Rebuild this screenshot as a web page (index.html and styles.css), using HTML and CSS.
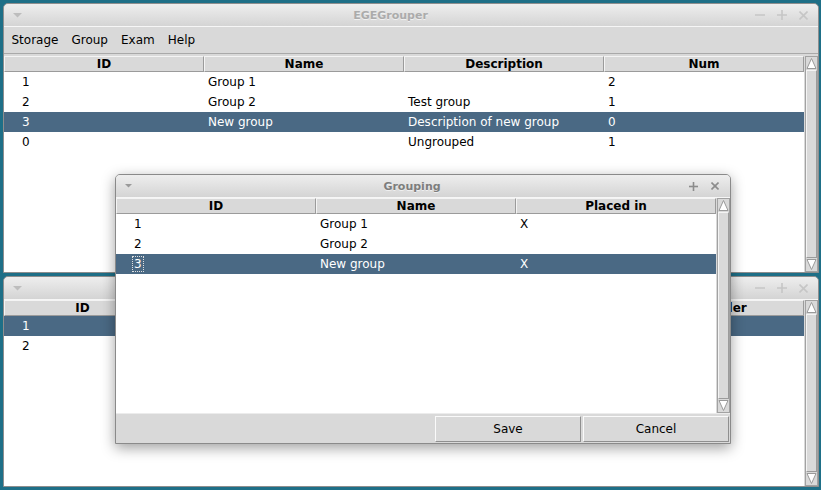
FILE: index.html
```html
<!DOCTYPE html>
<html>
<head>
<meta charset="utf-8">
<link rel="stylesheet" href="styles.css">
</head>
<body>
<div class="desktop">

  <!-- Main window -->
  <div class="win main">
    <div class="titlebar">
      <div class="tb-left main-left"><svg width="9" height="5" viewBox="0 0 9 5"><polygon points="0,0 9,0 4.5,4.5" fill="#bdbdbd"/></svg></div>
      <div class="title inactive">EGEGrouper</div>
      <div class="tb-right main-right">
        <svg width="10" height="10" viewBox="0 0 10 10"><line x1="0" y1="5" x2="10" y2="5" stroke="#c6c6c6" stroke-width="1.6"/></svg>
        <svg width="10" height="10" viewBox="0 0 10 10"><line x1="0" y1="5" x2="10" y2="5" stroke="#c6c6c6" stroke-width="1.6"/><line x1="5" y1="0" x2="5" y2="10" stroke="#c6c6c6" stroke-width="1.6"/></svg>
        <svg width="9" height="9" viewBox="0 0 9 9"><line x1="0.5" y1="0.5" x2="8.5" y2="8.5" stroke="#c6c6c6" stroke-width="1.6"/><line x1="8.5" y1="0.5" x2="0.5" y2="8.5" stroke="#c6c6c6" stroke-width="1.6"/></svg>
      </div>
    </div>
    <div class="menubar">
      <span class="menu">Storage</span>
      <span class="menu">Group</span>
      <span class="menu">Exam</span>
      <span class="menu">Help</span>
    </div>
    <div class="body main-body">
      <div class="table">
        <div class="thead">
          <div class="th">ID</div><div class="th">Name</div><div class="th">Description</div><div class="th">Num</div>
        </div>
        <div class="tr"><div class="td first">1</div><div class="td">Group 1</div><div class="td"></div><div class="td">2</div></div>
        <div class="tr"><div class="td first">2</div><div class="td">Group 2</div><div class="td">Test group</div><div class="td">1</div></div>
        <div class="tr sel"><div class="td first">3</div><div class="td">New group</div><div class="td">Description of new group</div><div class="td">0</div></div>
        <div class="tr"><div class="td first">0</div><div class="td"></div><div class="td">Ungrouped</div><div class="td">1</div></div>
      </div>
      <div class="sb">
        <div class="arrow"><svg width="11" height="13" viewBox="0 0 11 13"><polygon points="5.5,1.5 10,11.5 1,11.5" fill="#fff" stroke="#9a9a9a" stroke-width="1"/></svg></div>
        <div class="thumb"></div>
        <div class="arrow"><svg width="11" height="13" viewBox="0 0 11 13"><polygon points="1,1.5 10,1.5 5.5,11.5" fill="#fff" stroke="#9a9a9a" stroke-width="1"/></svg></div>
      </div>
    </div>
  </div>

  <!-- Second window (behind) -->
  <div class="win second">
    <div class="titlebar">
      <div class="tb-left main-left"><svg width="9" height="5" viewBox="0 0 9 5"><polygon points="0,0 9,0 4.5,4.5" fill="#bdbdbd"/></svg></div>
      <div class="title inactive"></div>
      <div class="tb-right main-right">
        <svg width="10" height="10" viewBox="0 0 10 10"><line x1="0" y1="5" x2="10" y2="5" stroke="#c6c6c6" stroke-width="1.6"/></svg>
        <svg width="10" height="10" viewBox="0 0 10 10"><line x1="0" y1="5" x2="10" y2="5" stroke="#c6c6c6" stroke-width="1.6"/><line x1="5" y1="0" x2="5" y2="10" stroke="#c6c6c6" stroke-width="1.6"/></svg>
        <svg width="9" height="9" viewBox="0 0 9 9"><line x1="0.5" y1="0.5" x2="8.5" y2="8.5" stroke="#c6c6c6" stroke-width="1.6"/><line x1="8.5" y1="0.5" x2="0.5" y2="8.5" stroke="#c6c6c6" stroke-width="1.6"/></svg>
      </div>
    </div>
    <div class="body">
      <div class="table">
        <div class="thead">
          <div class="th c1">ID</div><div class="th c2">Name</div><div class="th c2">Surname</div><div class="th c2">Group</div><div class="th c5">Handler</div>
        </div>
        <div class="tr sel"><div class="td first c1">1</div><div class="td c2"></div><div class="td c2"></div><div class="td c2"></div><div class="td c5"></div></div>
        <div class="tr"><div class="td first c1">2</div><div class="td c2"></div><div class="td c2"></div><div class="td c2"></div><div class="td c5"></div></div>
      </div>
      <div class="sb">
        <div class="arrow"><svg width="11" height="13" viewBox="0 0 11 13"><polygon points="5.5,1.5 10,11.5 1,11.5" fill="#fff" stroke="#9a9a9a" stroke-width="1"/></svg></div>
        <div class="thumb"></div>
        <div class="arrow"><svg width="11" height="13" viewBox="0 0 11 13"><polygon points="1,1.5 10,1.5 5.5,11.5" fill="#fff" stroke="#9a9a9a" stroke-width="1"/></svg></div>
      </div>
    </div>
  </div>

  <!-- Grouping dialog -->
  <div class="win dialog">
    <div class="titlebar">
      <div class="tb-left dlg-left"><svg width="7" height="4" viewBox="0 0 7 4"><polygon points="0,0 7,0 3.5,3.5" fill="#9a9a9a"/></svg></div>
      <div class="title active">Grouping</div>
      <div class="tb-right dlg-right">
        <svg width="9" height="9" viewBox="0 0 9 9"><line x1="0" y1="4.5" x2="9" y2="4.5" stroke="#8c8c8c" stroke-width="1.6"/><line x1="4.5" y1="0" x2="4.5" y2="9" stroke="#8c8c8c" stroke-width="1.6"/></svg>
        <svg width="8" height="8" viewBox="0 0 8 8"><line x1="0.5" y1="0.5" x2="7.5" y2="7.5" stroke="#8c8c8c" stroke-width="1.6"/><line x1="7.5" y1="0.5" x2="0.5" y2="7.5" stroke="#8c8c8c" stroke-width="1.6"/></svg>
      </div>
    </div>
    <div class="body">
      <div class="table">
        <div class="thead">
          <div class="th">ID</div><div class="th">Name</div><div class="th">Placed in</div>
        </div>
        <div class="tr"><div class="td first">1</div><div class="td">Group 1</div><div class="td">X</div></div>
        <div class="tr"><div class="td first">2</div><div class="td">Group 2</div><div class="td"></div></div>
        <div class="tr sel"><div class="td first"><span class="focus">3</span></div><div class="td">New group</div><div class="td">X</div></div>
      </div>
      <div class="sb">
        <div class="arrow"><svg width="11" height="13" viewBox="0 0 11 13"><polygon points="5.5,1.5 10,11.5 1,11.5" fill="#fff" stroke="#9a9a9a" stroke-width="1"/></svg></div>
        <div class="thumb"></div>
        <div class="arrow"><svg width="11" height="13" viewBox="0 0 11 13"><polygon points="1,1.5 10,1.5 5.5,11.5" fill="#fff" stroke="#9a9a9a" stroke-width="1"/></svg></div>
      </div>
    </div>
    <div class="buttons">
      <div class="btn">Save</div>
      <div class="btn">Cancel</div>
    </div>
  </div>

</div>
</body>
</html>
```

FILE: styles.css
```css
html, body {
  margin: 0;
  padding: 0;
}
body {
  width: 821px;
  height: 490px;
  overflow: hidden;
  background: #1e6f87;
  font-family: "DejaVu Sans", "Liberation Sans", sans-serif;
  font-size: 12px;
  color: #000;
}
.desktop {
  position: relative;
  width: 821px;
  height: 490px;
}
.win {
  position: absolute;
  box-sizing: border-box;
  border: 1px solid #8e8e8e;
  border-radius: 5px 5px 0 0;
  background: #d9d9d9;
  display: flex;
  flex-direction: column;
  overflow: hidden;
}
.main {
  left: 3px;
  top: 3px;
  width: 816px;
  height: 270px;
}
.second {
  left: 3px;
  top: 276px;
  width: 816px;
  height: 211px;
}
.dialog {
  left: 115px;
  top: 174px;
  width: 616px;
  height: 270px;
  border-color: #8a8a8a;
  box-shadow: 0 4px 14px rgba(0, 0, 0, 0.38);
  overflow: visible;
}
.titlebar {
  flex: none;
  height: 22px;
  display: flex;
  align-items: center;
  background: linear-gradient(#eeeeee, #d4d4d4);
  border-bottom: 1px solid #f6f6f6;
  border-radius: 4px 4px 0 0;
}
.tb-left {
  display: flex;
  align-items: center;
  flex: none;
}
.main-left {
  width: 26px;
  padding-left: 9px;
  box-sizing: border-box;
}
.dlg-left {
  width: 24px;
  padding-left: 9px;
  box-sizing: border-box;
}
.title {
  flex: 1;
  text-align: center;
  white-space: nowrap;
  font-size: 11px;
  font-weight: bold;
  padding-top: 1px;
}
.title.inactive {
  color: #ababab;
  text-shadow: 0 1px 0 rgba(255,255,255,0.6);
}
.title.active {
  color: #7d7d7d;
  text-shadow: 0 1px 0 rgba(255,255,255,0.6);
}
.tb-right {
  flex: none;
  display: flex;
  align-items: center;
  box-sizing: border-box;
}
.main-right {
  width: 67px;
  padding-left: 4px;
  gap: 12px;
}
.dlg-right {
  width: 46px;
  padding-left: 5px;
  gap: 13px;
}
.menubar {
  flex: none;
  height: 26px;
  display: flex;
  align-items: center;
  padding-left: 1px;
}
.menu {
  padding: 0 6.5px;
}
.body {
  flex: 1;
  display: flex;
  gap: 1px;
  min-height: 0;
}
.main-body {
  border-top: 1px solid #a9a9a9;
  padding-top: 2px;
}
.table {
  flex: 1;
  background: #fff;
  display: flex;
  flex-direction: column;
  overflow: hidden;
}
.thead {
  flex: none;
  display: flex;
  height: 16px;
}
.th {
  width: 200px;
  flex: none;
  box-sizing: border-box;
  background: #d9d9d9;
  border: 1px solid;
  border-color: #f4f4f4 #9b9b9b #9b9b9b #f4f4f4;
  font-weight: bold;
  text-align: center;
  line-height: 14px;
  white-space: nowrap;
  overflow: hidden;
}
.tr {
  flex: none;
  display: flex;
  height: 20px;
  align-items: center;
}
.td {
  width: 200px;
  flex: none;
  box-sizing: border-box;
  padding-left: 4px;
  white-space: nowrap;
}
.td.first {
  padding-left: 18px;
}
.c1 { width: 157px; }
.c2 { width: 161px; }
.c5 { width: 160px; }
.th.c5 {
  padding-right: 8px;
}
.tr.sel {
  background: #4a6984;
  color: #fff;
}
.focus {
  display: inline-block;
  line-height: 14px;
  padding: 0 1px;
  margin-left: -2px;
  border: 1px dotted #e0e0e0;
}
.sb {
  flex: none;
  width: 13px;
  box-sizing: border-box;
  border: 1px solid #a2a2a2;
  background: #d9d9d9;
  display: flex;
  flex-direction: column;
}
.arrow {
  flex: none;
  height: 13px;
  display: flex;
  justify-content: center;
}
.thumb {
  flex: 1;
  box-sizing: border-box;
  border: 1px solid;
  border-color: #f4f4f4 #9b9b9b #9b9b9b #f4f4f4;
}
.buttons {
  flex: none;
  height: 30px;
  box-sizing: border-box;
  padding: 2px 1px 1px 0;
  display: flex;
  justify-content: flex-end;
  gap: 2px;
  border-top: 1px solid #ececec;
}
.btn {
  width: 146px;
  height: 26px;
  box-sizing: border-box;
  border: 1px solid;
  border-color: #fafafa #8f8f8f #8f8f8f #fafafa;
  display: flex;
  align-items: center;
  justify-content: center;
  color: #000;
}
```
